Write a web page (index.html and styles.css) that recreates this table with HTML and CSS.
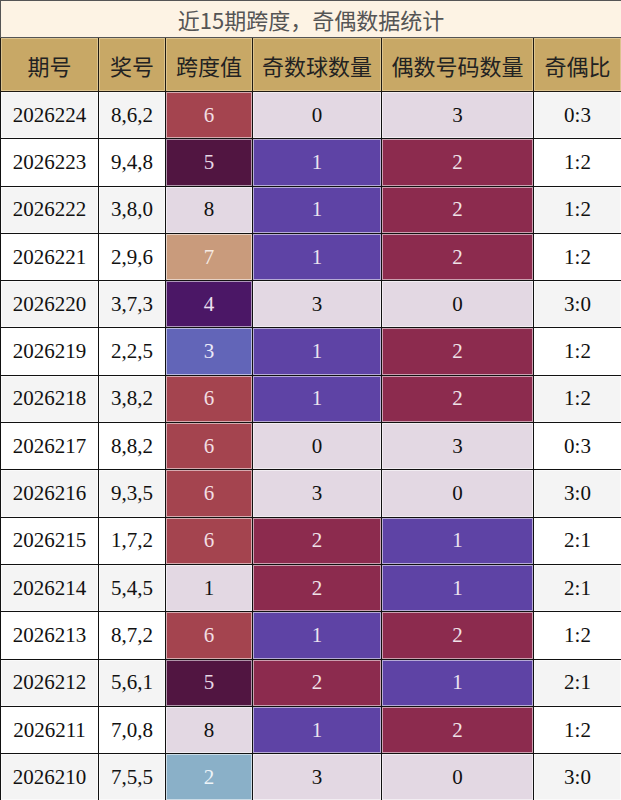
FILE: index.html
```html
<!DOCTYPE html>
<html lang="zh">
<head>
<meta charset="utf-8">
<title>近15期跨度，奇偶数据统计</title>
<link rel="stylesheet" href="styles.css">
</head>
<body>
<table class="stats">
  <colgroup>
    <col class="c-issue"><col class="c-draw"><col class="c-span"><col class="c-odd"><col class="c-even"><col class="c-ratio">
  </colgroup>
  <thead>
    <tr class="title-row"><th colspan="6" class="title">近15期跨度，奇偶数据统计</th></tr>
    <tr class="head-row">
      <th>期号</th><th>奖号</th><th>跨度值</th><th>奇数球数量</th><th>偶数号码数量</th><th>奇偶比</th>
    </tr>
  </thead>
  <tbody>
    <tr class="alt"><td>2026224</td><td>8,6,2</td><td class="s-rose">6</td><td class="n-light">0</td><td class="n-light">3</td><td>0:3</td></tr>
    <tr><td>2026223</td><td>9,4,8</td><td class="s-plum">5</td><td class="n-purple">1</td><td class="n-maroon">2</td><td>1:2</td></tr>
    <tr class="alt"><td>2026222</td><td>3,8,0</td><td class="n-light">8</td><td class="n-purple">1</td><td class="n-maroon">2</td><td>1:2</td></tr>
    <tr><td>2026221</td><td>2,9,6</td><td class="s-tan">7</td><td class="n-purple">1</td><td class="n-maroon">2</td><td>1:2</td></tr>
    <tr class="alt"><td>2026220</td><td>3,7,3</td><td class="s-violet">4</td><td class="n-light">3</td><td class="n-light">0</td><td>3:0</td></tr>
    <tr><td>2026219</td><td>2,2,5</td><td class="s-blue">3</td><td class="n-purple">1</td><td class="n-maroon">2</td><td>1:2</td></tr>
    <tr class="alt"><td>2026218</td><td>3,8,2</td><td class="s-rose">6</td><td class="n-purple">1</td><td class="n-maroon">2</td><td>1:2</td></tr>
    <tr><td>2026217</td><td>8,8,2</td><td class="s-rose">6</td><td class="n-light">0</td><td class="n-light">3</td><td>0:3</td></tr>
    <tr class="alt"><td>2026216</td><td>9,3,5</td><td class="s-rose">6</td><td class="n-light">3</td><td class="n-light">0</td><td>3:0</td></tr>
    <tr><td>2026215</td><td>1,7,2</td><td class="s-rose">6</td><td class="n-maroon">2</td><td class="n-purple">1</td><td>2:1</td></tr>
    <tr class="alt"><td>2026214</td><td>5,4,5</td><td class="n-light">1</td><td class="n-maroon">2</td><td class="n-purple">1</td><td>2:1</td></tr>
    <tr><td>2026213</td><td>8,7,2</td><td class="s-rose">6</td><td class="n-purple">1</td><td class="n-maroon">2</td><td>1:2</td></tr>
    <tr class="alt"><td>2026212</td><td>5,6,1</td><td class="s-plum">5</td><td class="n-maroon">2</td><td class="n-purple">1</td><td>2:1</td></tr>
    <tr><td>2026211</td><td>7,0,8</td><td class="n-light">8</td><td class="n-purple">1</td><td class="n-maroon">2</td><td>1:2</td></tr>
    <tr class="alt"><td>2026210</td><td>7,5,5</td><td class="s-sky">2</td><td class="n-light">3</td><td class="n-light">0</td><td>3:0</td></tr>
  </tbody>
</table>
</body>
</html>
```

FILE: styles.css
```css
html, body {
  margin: 0;
  padding: 0;
  background: #ffffff;
}

.stats {
  width: 621px;
  table-layout: fixed;
  border-collapse: collapse;
  font-family: "Liberation Serif", "Times New Roman", serif;
}

.c-issue { width: 98px; }
.c-draw { width: 67px; }
.c-span { width: 87px; }
.c-odd { width: 129px; }
.c-even { width: 152px; }
.c-ratio { width: 88px; }

.title {
  height: 36px;
  padding: 0;
  background: #fdf3e4;
  border: 1px solid #555;
  color: #555;
  font-family: "Noto Sans CJK SC", "Noto Sans", sans-serif;
  font-weight: 400;
  font-size: 22px;
  line-height: 36px;
  text-align: center;
}

.head-row th {
  height: 53px;
  padding: 0;
  background: #c8a866;
  color: #222;
  font-family: "Noto Sans CJK SC", "Noto Sans", sans-serif;
  font-weight: 400;
  font-size: 22px;
  text-align: center;
  border: 1px solid #1f1a12;
  box-shadow: inset 0 0 0 1px #dcc38e;
}

tbody td {
  height: 46.3px;
  padding: 0;
  text-align: center;
  vertical-align: middle;
  font-size: 21px;
  color: #111;
  background: #ffffff;
  border: 1px solid #111;
  box-shadow: inset 0 0 0 1px rgba(255, 255, 255, 0.55);
}

tbody tr.alt td {
  background: #f4f4f4;
}

tbody tr td.n-light { background: #e3d8e3; color: #111; }
tbody tr td.n-purple { background: #5e43a5; color: #ece4f0; }
tbody tr td.n-maroon { background: #8c2b4e; color: #f0e2e8; }
tbody tr td.s-rose { background: #a4444f; color: #f2dee2; }
tbody tr td.s-plum { background: #511541; color: #e8d8e6; }
tbody tr td.s-tan { background: #c99b7c; color: #f6ebe4; }
tbody tr td.s-violet { background: #4b1766; color: #ece0f0; }
tbody tr td.s-blue { background: #6265b8; color: #eceaf8; }
tbody tr td.s-sky { background: #8ab0c8; color: #eef4f8; }
```
